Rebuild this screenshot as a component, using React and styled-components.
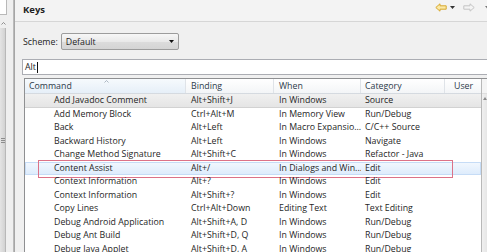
import React from 'react';
import styled, { createGlobalStyle } from 'styled-components';

const Global = createGlobalStyle`
  html, body { margin: 0; padding: 0; }
  body {
    width: 487px; height: 252px; overflow: hidden; background: #f0f0f0;
    font-family: "Open Sans", "Noto Sans", sans-serif;
  }
  * { box-sizing: border-box; }
`;

const FS = '8.8px';

const Page = styled.div`
  display: flex;
  width: 487px;
  height: 252px;
  overflow: hidden;
`;

const LeftPane = styled.div`
  width: 13px;
  flex: none;
  display: flex;
  flex-direction: column;
  background: #efefef;
`;

const LeftSearch = styled.div`
  width: 7px;
  height: 15px;
  background: #fff;
  border-right: 1px solid #b9b9b9;
  border-bottom: 1px solid #b9b9b9;
`;

const LeftScroll = styled.div`
  flex: 1;
  width: 6px;
  margin-top: 7px;
  display: flex;
  flex-direction: column;
  align-items: center;
`;

const LeftThumb = styled.div`
  flex: 1;
  width: 6px;
  margin-top: 3px;
  background: linear-gradient(to right, #e4e4e4, #d2d2d2);
  border-right: 1px solid #b8b8b8;
  display: flex;
  align-items: center;
  justify-content: center;
`;

const Grip = styled.div`
  width: 4px;
  height: 5px;
  background: repeating-linear-gradient(#8c8c8c 0 1px, transparent 1px 2px);
`;

const Divider = styled.div`
  width: 2px;
  flex: none;
  background: linear-gradient(to right, #c4c4c4, #9c9c9c);
`;

const Panel = styled.div`
  flex: 1;
  min-width: 0;
  display: flex;
  flex-direction: column;
  background: #f0f0f0;
`;

const TitleBar = styled.div`
  height: 22px;
  flex: none;
  display: flex;
  align-items: center;
  padding-left: 8px;
  border-bottom: 1px solid #d6d6d6;
  background: #f3f3f3;
`;

const Title = styled.span`
  font-weight: 700;
  font-size: 9.5px;
  color: #1f1f1f;
  margin-top: -2px;
`;

const NavIcons = styled.div`
  margin-left: auto;
  display: flex;
  align-items: center;
  gap: 3px;
  margin-top: -6px;
  margin-right: -3px;
`;

const Gap = styled.span`
  width: ${p => p.$w}px;
`;

const Body = styled.div`
  flex: 1;
  min-height: 0;
  display: flex;
  flex-direction: column;
  padding-left: 7px;
`;

const SchemeRow = styled.div`
  margin-top: 11px;
  height: 17px;
  display: flex;
  align-items: center;
  gap: 3px;
  font-size: ${FS};
  color: #1e1e1e;
`;

const Label = styled.span`
  padding-left: 1px;
`;

const Combo = styled.div`
  width: 118px;
  height: 17px;
  border: 1px solid #9c9c9c;
  border-radius: 2px;
  background: linear-gradient(#f7f7f7, #e9e9e9 50%, #dcdcdc 51%, #d4d4d4);
  display: flex;
  align-items: center;
  padding: 0 4px 0 4px;
  font-size: ${FS};
  color: #1e1e1e;
`;

const ComboText = styled.span`
  flex: 1;
`;

const Filter = styled.div`
  margin-top: 9px;
  height: 16px;
  margin-right: -3px;
  background: #fff;
  border: 1px solid #abadb3;
  display: flex;
  align-items: center;
  padding-left: 2px;
  font-size: ${FS};
  color: #1e1e1e;
`;

const Caret = styled.span`
  display: inline-block;
  width: 1px;
  height: 11px;
  background: #111;
  margin-left: 1px;
`;

const Table = styled.div`
  margin-top: 3px;
  margin-left: 2px;
  flex: 1;
  min-height: 0;
  display: flex;
  border: 1px solid #8f9092;
  border-right: none;
  border-bottom: none;
  background: #fff;
  overflow: hidden;
`;

const Grid = styled.div`
  flex: 1;
  min-width: 0;
  display: flex;
  flex-direction: column;
  border-right: 1px solid #b8b8b8;
`;

const cols = '161px 88px 87px 84px 1fr';

const HeaderRow = styled.div`
  display: grid;
  grid-template-columns: ${cols};
  height: 15px;
  flex: none;
  font-size: ${FS};
  color: #2c3a4a;
  border-bottom: 1px solid #d5dae0;
`;

const HeaderCell = styled.div`
  position: relative;
  display: flex;
  align-items: center;
  padding-left: ${p => p.$pad}px;
  border-right: ${p => (p.$last ? 'none' : '1px solid #dfe3e8')};
  background: ${p =>
    p.$sorted
      ? 'linear-gradient(#f6fafd, #e6eff8)'
      : 'linear-gradient(#ffffff, #f3f5f7)'};
`;

const SortMark = styled.svg`
  position: absolute;
  left: 79px;
  top: 1px;
`;

const Row = styled.div`
  position: relative;
  display: grid;
  grid-template-columns: ${cols};
  height: 13.5px;
  flex: none;
  align-items: center;
  font-size: ${FS};
  color: #262626;
  white-space: nowrap;
  background: ${p =>
    p.$selected
      ? 'linear-gradient(#f3f8fe, #dcebfc)'
      : p.$hover
      ? 'linear-gradient(#f0f0f0, #e4e4e4)'
      : 'transparent'};
  box-shadow: ${p =>
    p.$selected ? 'inset 0 0 0 1px #c6dcf6' : p.$hover ? 'inset 0 -1px 0 #d2d2d2' : 'none'};
`;

const Cell = styled.div`
  padding-left: ${p => p.$pad}px;
  overflow: hidden;
  line-height: 13.5px;
`;

const Highlight = styled.div`
  position: absolute;
  left: 13px;
  width: 415px;
  top: -2px;
  bottom: -3px;
  border: 1.5px solid #dc7288;
  pointer-events: none;
`;

const VScroll = styled.div`
  width: 5px;
  flex: none;
  background: linear-gradient(to right, #f0f0f0, #e6e6e6);
  display: flex;
  flex-direction: column;
`;

const VScrollHead = styled.div`
  height: 15px;
  background: #f4f4f4;
  border-bottom: 1px solid #dedede;
`;

const VScrollArrow = styled.div`
  height: 8px;
  display: flex;
  align-items: center;
  justify-content: center;
`;

const rows = [
  ['Add Javadoc Comment', 'Alt+Shift+J', 'In Windows', 'Source'],
  ['Add Memory Block', 'Ctrl+Alt+M', 'In Memory View', 'Run/Debug'],
  ['Back', 'Alt+Left', 'In Macro Expansio...', 'C/C++ Source'],
  ['Backward History', 'Alt+Left', 'In Windows', 'Navigate'],
  ['Change Method Signature', 'Alt+Shift+C', 'In Windows', 'Refactor - Java'],
  ['Content Assist', 'Alt+/', 'In Dialogs and Win...', 'Edit'],
  ['Context Information', 'Alt+?', 'In Windows', 'Edit'],
  ['Context Information', 'Alt+Shift+?', 'In Windows', 'Edit'],
  ['Copy Lines', 'Ctrl+Alt+Down', 'Editing Text', 'Text Editing'],
  ['Debug Android Application', 'Alt+Shift+A, D', 'In Windows', 'Run/Debug'],
  ['Debug Ant Build', 'Alt+Shift+D, Q', 'In Windows', 'Run/Debug'],
  ['Debug Java Applet', 'Alt+Shift+D, A', 'In Windows', 'Run/Debug'],
];

const BackIcon = () => (
  <svg width="12" height="9" viewBox="0 0 12 9">
    <path d="M0.8 4.5 L5 0.8 V2.8 H11.2 V6.2 H5 V8.2 Z" fill="#fbe9a6" stroke="#d7a82f" strokeWidth="1" strokeLinejoin="round" />
  </svg>
);
const FwdIcon = () => (
  <svg width="12" height="9" viewBox="0 0 12 9">
    <path d="M11.2 4.5 L7 0.8 V2.8 H0.8 V6.2 H7 V8.2 Z" fill="#f4f4f4" stroke="#c4c4c4" strokeWidth="1" strokeLinejoin="round" />
  </svg>
);
const DropTri = ({ color = '#333' }) => (
  <svg width="5" height="3" viewBox="0 0 5 3">
    <path d="M0 0 H5 L2.5 3 Z" fill={color} />
  </svg>
);

export default function App() {
  return (
    <>
      <Global />
      <Page>
        <LeftPane>
          <LeftSearch />
          <LeftScroll>
            <svg width="5" height="3" viewBox="0 0 5 3">
              <path d="M0.5 2.5 L2.5 0.5 L4.5 2.5" fill="none" stroke="#777" strokeWidth="0.8" />
            </svg>
            <LeftThumb>
              <Grip />
            </LeftThumb>
          </LeftScroll>
        </LeftPane>
        <Divider />
        <Panel>
          <TitleBar>
            <Title>Keys</Title>
            <NavIcons>
              <BackIcon />
              <DropTri />
              <Gap $w={2} />
              <FwdIcon />
              <Gap $w={4} />
              <DropTri color="#777" />
            </NavIcons>
          </TitleBar>
          <Body>
            <SchemeRow>
              <Label>Scheme:</Label>
              <Combo>
                <ComboText>Default</ComboText>
                <DropTri color="#111" />
              </Combo>
            </SchemeRow>
            <Filter>
              Alt<Caret />
            </Filter>
            <Table>
              <Grid>
                <HeaderRow>
                  <HeaderCell $pad={4} $sorted>
                    Command
                    <SortMark width="5" height="3" viewBox="0 0 5 3">
                      <path d="M0.5 2.5 L2.5 0.5 L4.5 2.5" fill="none" stroke="#9aa6b4" strokeWidth="0.8" />
                    </SortMark>
                  </HeaderCell>
                  <HeaderCell $pad={5}>Binding</HeaderCell>
                  <HeaderCell $pad={5}>When</HeaderCell>
                  <HeaderCell $pad={4}>Category</HeaderCell>
                  <HeaderCell $pad={9} $last>User</HeaderCell>
                </HeaderRow>
                {rows.map((r, i) => (
                  <Row key={i} $selected={i === 5} $hover={i === 0}>
                    <Cell $pad={29}>{r[0]}</Cell>
                    <Cell $pad={5}>{r[1]}</Cell>
                    <Cell $pad={5}>{r[2]}</Cell>
                    <Cell $pad={4}>{r[3]}</Cell>
                    <Cell $pad={9} />
                    {i === 5 && <Highlight />}
                  </Row>
                ))}
              </Grid>
              <VScroll>
                <VScrollHead />
                <VScrollArrow>
                  <svg width="4" height="3" viewBox="0 0 4 3">
                    <path d="M0 3 L2 0 L4 3 Z" fill="#8a8a8a" />
                  </svg>
                </VScrollArrow>
              </VScroll>
            </Table>
          </Body>
        </Panel>
      </Page>
    </>
  );
}
